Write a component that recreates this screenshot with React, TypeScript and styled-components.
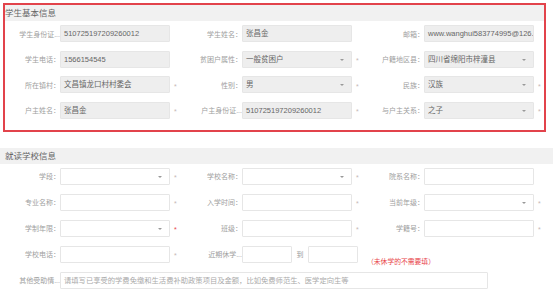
import React from 'react';
import styled, { createGlobalStyle } from 'styled-components';

const GlobalStyle = createGlobalStyle`
  html, body {
    margin: 0;
    padding: 0;
    background: #fff;
  }
  body {
    width: 553px;
    height: 301px;
    overflow: hidden;
    font-family: "Liberation Sans", "Noto Sans CJK SC", sans-serif;
  }
`;

const Page = styled.div`
  padding-top: 3px;
`;

const Section = styled.section<{ $marked?: boolean }>`
  margin: ${(p) => (p.$marked ? '0 7px 0 3px' : '16px 0 0 0')};
  border: ${(p) => (p.$marked ? '2px solid #e2434b' : 'none')};
  padding-bottom: ${(p) => (p.$marked ? '11px' : '0')};
`;

const SectionTitle = styled.div<{ $inset?: boolean }>`
  height: 16px;
  line-height: 16px;
  background: #f1f1f1;
  color: #666;
  font-size: 8.5px;
  padding-left: ${(p) => (p.$inset ? '0' : '5px')};
`;

const FormGrid = styled.div<{ $cols: string; $gap: number }>`
  display: grid;
  grid-template-columns: ${(p) => p.$cols};
  grid-auto-rows: 17px;
  row-gap: ${(p) => p.$gap}px;
  padding-top: 4px;
  align-items: center;
`;

const Label = styled.div`
  justify-self: end;
  white-space: nowrap;
  font-size: 7px;
  color: #a0a0a0;
`;

const Control = styled.div<{ $filled?: boolean; $width?: number }>`
  position: relative;
  box-sizing: border-box;
  height: 17px;
  width: ${(p) => (p.$width ? `${p.$width}px` : '100%')};
  border: 1px solid #e6e6e6;
  border-radius: 1px;
  background: ${(p) => (p.$filled ? '#eeeeee' : '#fff')};
  padding: 0 3px;
  font-size: 7.5px;
  line-height: 15px;
  color: #666;
  white-space: nowrap;
  overflow: hidden;
`;

const Caret = styled.span`
  position: absolute;
  right: 7px;
  top: 7px;
  width: 0;
  height: 0;
  border-left: 2px solid transparent;
  border-right: 2px solid transparent;
  border-top: 2.5px solid #999;
`;

const Star = styled.span<{ $red?: boolean }>`
  padding-left: 4px;
  font-size: 7px;
  line-height: 7px;
  padding-top: 3px;
  color: ${(p) => (p.$red ? '#e8454a' : '#c8b8b8')};
`;

const Range = styled.div`
  grid-column: span 2;
  display: flex;
  align-items: center;
`;

const To = styled.span`
  width: 16px;
  text-align: center;
  font-size: 7px;
  color: #999;
`;

const Note = styled.div`
  grid-column: span 3;
  align-self: end;
  margin: 0 0 -3px 3px;
  font-size: 6.8px;
  color: #e8454a;
  white-space: nowrap;
`;

const Placeholder = styled.span`
  font-size: 7.3px;
  color: #aaa;
`;

const Wide = styled.div`
  grid-column: 2 / span 8;
`;

type FieldDef = {
  label: string;
  value?: string;
  select?: boolean;
  star?: boolean;
  redStar?: boolean;
};

function Field({ f, filled }: { f: FieldDef; filled?: boolean }) {
  return (
    <>
      <Label>{f.label}</Label>
      <Control $filled={filled}>
        {f.value}
        {f.select && <Caret />}
      </Control>
      {f.star ? <Star $red={f.redStar}>*</Star> : <span />}
    </>
  );
}

const basicInfo: FieldDef[] = [
  { label: '学生身份证...', value: '510725197209260012' },
  { label: '学生姓名：', value: '张昌金' },
  { label: '邮箱：', value: 'www.wanghui583774995@126.com' },
  { label: '学生电话：', value: '1566154545' },
  { label: '贫困户属性：', value: '一般贫困户', select: true, star: true },
  { label: '户籍地区县：', value: '四川省绵阳市梓潼县', select: true },
  { label: '所在镇村：', value: '文昌镇龙口村村委会', star: true },
  { label: '性别：', value: '男', select: true, star: true },
  { label: '民族：', value: '汉族', select: true, star: true },
  { label: '户主姓名：', value: '张昌金', star: true },
  { label: '户主身份证...', value: '510725197209260012', star: true },
  { label: '与户主关系：', value: '之子', select: true, star: true },
];

const schoolInfo: FieldDef[] = [
  { label: '学段：', select: true, star: true },
  { label: '学校名称：', select: true, star: true },
  { label: '院系名称：' },
  { label: '专业名称：', star: true },
  { label: '入学时间：', star: true },
  { label: '当前年级：', select: true, star: true },
  { label: '学制年限：', select: true, star: true, redStar: true },
  { label: '班级：', star: true },
  { label: '学籍号：', star: true },
  { label: '学校电话：', star: true },
];

export default function App() {
  return (
    <Page>
      <GlobalStyle />
      <Section $marked>
        <SectionTitle $inset>学生基本信息</SectionTitle>
        <FormGrid $cols="55px 110px 12px 60px 110px 12px 60px 110px 8px" $gap={8.5}>
          {basicInfo.map((f) => (
            <Field key={f.label} f={f} filled />
          ))}
        </FormGrid>
      </Section>

      <Section>
        <SectionTitle>就读学校信息</SectionTitle>
        <FormGrid $cols="60px 110px 12px 60px 110px 12px 60px 110px 12px" $gap={9}>
          {schoolInfo.map((f) => (
            <Field key={f.label} f={f} />
          ))}
          <Label>近期休学...</Label>
          <Range>
            <Control $width={50} />
            <To>到</To>
            <Control $width={50} />
          </Range>
          <Note>（未休学的不需要填）</Note>
          <Label>其他受助情...</Label>
          <Wide>
            <Control $width={428}>
              <Placeholder>请填写已享受的学费免缴和生活费补助政策项目及金额，比如免费师范生、医学定向生等</Placeholder>
            </Control>
          </Wide>
        </FormGrid>
      </Section>
    </Page>
  );
}
